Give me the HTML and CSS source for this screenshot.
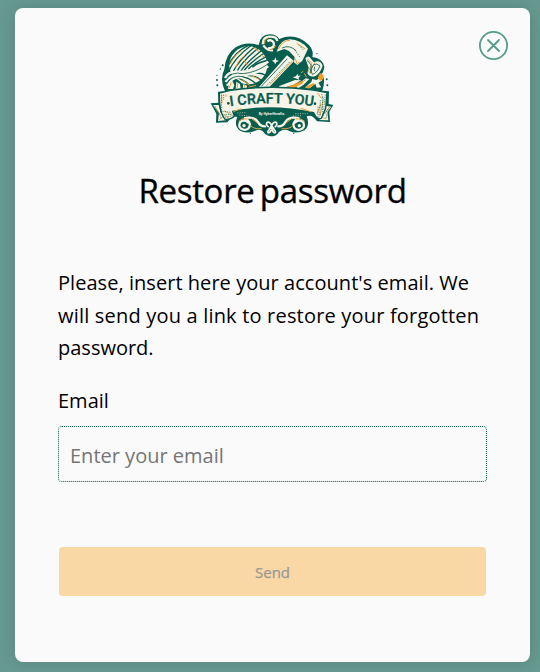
FILE: index.html
```html
<!DOCTYPE html>
<html lang="en">
<head>
<meta charset="utf-8">
<title>Restore password</title>
<link rel="stylesheet" href="styles.css">
</head>
<body>
<main class="card">
  <button class="close" type="button" aria-label="Close">
    <svg width="30" height="30" viewBox="0 0 30 30"><circle cx="14.5" cy="15.5" r="13.6"/><path d="M9 10 20 21M20 10 9 21"/></svg>
  </button>
  <svg class="logo" viewBox="0 0 432 360" role="img" aria-label="I craft you">
    <defs>
      <clipPath id="ball"><circle cx="145" cy="121" r="59"/></clipPath>
      <path id="arch" d="M91 244Q215 225 344 244"/>
    </defs>
    <!-- Silhouette -->
    <path class="green" d="M75 199Q58 164 73 133Q76 88 107 67Q137 48 176 60Q180 29 210 28Q229 28 238 42Q286 21 326 59Q342 76 337 96Q367 99 373 125Q371 142 363 148Q379 159 367 197L387 199 386 237 400 240 388 260 390 291 351 289Q337 267 320 274Q331 300 313 316Q290 328 268 318Q252 309 237 321Q228 335 215 334Q198 333 190 320Q178 309 162 319Q136 328 118 316Q101 300 112 276L98 274 82 292 48 293 49 266 32 235 55 233 54 200Z"/>
    <!-- Yarn -->
    <circle class="cream" cx="145" cy="121" r="57"/>
    <g class="strands" clip-path="url(#ball)">
      <path d="M80 130Q103 81 145 61M86 139Q104 98 154 61M99 141Q114 108 166 64M111 141Q121 114 176 68M121 141Q133 117 186 76M132 137Q145 117 193 84M145 132Q158 117 200 94M157 127Q173 112 207 105M91 158Q117 162 133 188M103 156Q132 162 151 184M119 155Q147 156 170 178M137 151Q168 150 186 168M160 145Q184 141 199 152"/>
    </g>
    <g class="orange-line"><path d="M91 117Q104 88 124 78M106 128Q115 104 134 91M160 67 177 80M181 89 193 96M125 163 149 181M153 151 178 163M132 105 144 123"/></g>
    <path class="yarn-wrap" d="M75 159Q86 135 126 141 166 139 205 110M77 171Q93 143 130 151 174 146 205 124M81 182Q97 151 128 158"/>
    <path class="strand thin" d="M79 164Q91 139 130 146 169 142 204 117M80 177Q95 148 131 155"/>
    <path class="cream" d="M84 192Q86 171 96 165L103 181 99 192ZM107 191 109 170 120 177 122 191ZM128 191 130 177 141 182 140 190Z"/>
    <path class="orange-line" d="M87 190 94 172M111 190 113 175M132 189 134 180M145 187 168 181"/>
    <path class="curl" d="M204 70Q226 70 221 53 214 41 202 49M188 58Q188 35 211 35 230 35 232 48M190 61Q201 77 219 76"/>
    <path class="orange-line" d="M194 57 195 44 206 38M209 74Q225 72 226 61"/>
    <!-- Hammer -->
    <path class="cream" d="M230 80Q239 44 269 43 304 45 324 71L307 107 292 120 282 112 284 96 267 78 253 72Z"/>
    <path class="cream" d="M261 91 282 108 206 188 175 188ZM316 100Q326 89 331 99L342 112Q360 103 368 122 361 144 348 152 331 160 322 145L326 128Z"/>
    <path class="orange-line" d="M235 72Q249 45 270 46M286 101 291 116 300 111M278 107 210 178M322 101 335 115 325 140M345 113Q334 126 332 145M290 55 316 72"/>
    <path class="strand thin" d="M246 69Q270 58 289 78M262 101 184 184M322 106 334 121 330 145M341 119Q329 133 337 148 350 146 360 123 351 113 341 119M344 125Q340 134 345 139"/>
    <path class="strand grain" d="M285 76 301 98M269 111 195 187M297 61 311 76"/>
    <!-- Small tools and sparkles -->
    <path class="cream" d="M215 107 223 105 226 97 229 105 237 108 229 111 226 118 222 111ZM278 157 288 154 292 146 295 153 302 151 296 158 297 165 290 161ZM236 184 285 165 304 166 280 180 244 190ZM286 184 317 160 328 162 310 180 294 190ZM315 188 334 171 337 162 349 165 359 160 367 166 355 174 364 187 350 188 346 176 331 188Z"/>
    <path class="orange" d="M257 188 308 167 310 174 279 191ZM316 187 340 174 344 178 326 191ZM353 159 360 144 371 151 369 163 361 167Z"/>
    <path class="orange-line" d="M303 143 310 139M313 145 320 157M289 183 317 164"/>
    <!-- Ribbon tails and body -->
    <path class="cream" d="M39 240 56 240 61 262 77 286 54 288 57 265ZM394 245 378 243 375 261 358 285 385 286 382 261Z"/>
    <path class="orange-line" d="M45 247 61 269M59 284 68 275M388 247 375 264M379 281 367 278"/>
    <path class="strand grain" d="M45 244 65 281M389 247 363 281M380 268 378 282"/>
    <path class="cream ribbon" d="M58 204 92 196Q212 178 340 195L381 203 377 250 364 280Q351 285 341 263 214 237 98 259L103 274Q91 285 75 283 57 263 58 204Z"/>
    <path class="orange-line" d="M65 207 66 235M78 208 78 216M73 257 95 271M70 267 87 280M100 260 124 251M353 204 364 220M363 236 351 266M370 225 360 272M333 260 302 250"/>
    <path class="strand grain" d="M64 210 65 257M71 209 71 225M67 259 95 262M70 270 98 267M75 277 98 272M376 208 371 255M365 207 371 223M367 216 368 269M361 225 359 275M354 245 354 277"/>
    <text class="logo-name"><textPath href="#arch" textLength="250" lengthAdjust="spacingAndGlyphs">I CRAFT YOU</textPath></text>
    <circle class="green" cx="85" cy="235" r="4"/><circle class="green" cx="345" cy="236" r="4"/>
    <text class="logo-sub" x="176" y="271" textLength="79" lengthAdjust="spacingAndGlyphs">By HyberHerafts.</text>
    <path class="strand highlight" d="M112 264 138 263M118 270 150 274M286 266 323 266M279 273 304 272"/>
    <!-- Lower flourishes -->
    <g class="flourish"><path d="M144 292Q132 281 120 292 113 309 130 314 147 317 150 299 146 283 132 280 163 273 174 291 180 304 195 304"/><path d="M286 292Q298 281 310 292 317 309 300 314 283 317 280 299 284 283 298 280 267 273 256 291 250 304 235 304"/></g>
    <path class="orange-line" d="M116 289Q128 277 142 282M151 301Q160 313 185 311M314 289Q302 277 288 282M279 301Q270 313 245 311M154 280 172 294M276 280 258 294"/>
    <path class="knot" d="M206 306C192 298 203 285 211 295L223 314C233 326 219 327 217 314L213 306M224 306C238 298 227 285 219 295L207 314C197 326 211 327 213 314"/>
    <g class="cream"><circle cx="132" cy="302" r="5"/><circle cx="298" cy="302" r="5"/></g>
    <g class="green"><circle cx="68" cy="121" r="3"/><circle cx="61" cy="132" r="2"/><circle cx="51" cy="151" r="2"/><circle cx="51" cy="165" r="3"/><circle cx="52" cy="181" r="3"/><circle cx="380" cy="163" r="3"/><circle cx="382" cy="181" r="3"/><circle cx="351" cy="86" r="2"/><circle cx="151" cy="325" r="2"/><circle cx="281" cy="325" r="2"/></g>
  </svg>
  <h1 class="title">Restore password</h1>
  <form class="form">
    <p class="intro"><span class="line one">Please, insert here your account's email. We</span> <span class="line two">will send you a link to restore your forgotten</span> <span class="line">password.</span></p>
    <label class="label" for="email">Email</label>
    <input class="input" id="email" type="email" placeholder="Enter your email">
    <button class="send" type="submit" disabled>Send</button>
  </form>
</main>
</body>
</html>
```
FILE: styles.css
```css
* { box-sizing: border-box; }
body {
  margin: 0;
  padding: 8px 10px 10px 15px;
  height: 672px;
  overflow: hidden;
  background: #669a91;
  font-family: "Open Sans", "Noto Sans", sans-serif;
  color: #000;
}
.card {
  position: relative;
  height: 654px;
  padding: 17px 43px 0;
  border-radius: 8px;
  background: #fafafa;
  box-shadow: 0 0 18px rgba(0, 0, 0, .14);
}
.close {
  position: absolute;
  top: 22px;
  right: 21px;
  width: 30px;
  height: 30px;
  padding: 0;
  border: 0;
  background: none;
}
.close svg { display: block; fill: none; stroke: #559c8b; stroke-width: 1.8; stroke-linecap: round; }
.logo { display: block; width: 144px; height: 120px; margin-left: 142px; }
.green { fill: #075d4e; }
.cream { fill: #f6f4e9; }
.orange { fill: #ef9d25; }
.strands, .strand { fill: none; stroke: #075d4e; stroke-width: 4; }
.thin { stroke-width: 2.5; }
.grain { stroke-width: 2; stroke-dasharray: 4 3; }
.highlight { stroke: #f6f4e9; stroke-width: 2; stroke-dasharray: 3 4; }
.orange-line { fill: none; stroke: #e5a13e; stroke-width: 3; }
.ribbon { stroke: #075d4e; stroke-width: 4; }
.yarn-wrap { fill: none; stroke: #f6f4e9; stroke-width: 7; }
.curl { fill: none; stroke: #f6f4e9; stroke-width: 7; }
.flourish { fill: none; stroke: #f6f4e9; stroke-width: 7; stroke-linecap: round; }
.knot { fill: none; stroke: #f6f4e9; stroke-width: 5; }
.logo-name { font: 500 43px Roboto, sans-serif; fill: #075d4e; stroke: #075d4e; stroke-width: 1; }
.logo-sub { font: 700 10px Roboto, sans-serif; fill: #f6f4e9; }
.title {
  margin: 24px 0 0;
  font: 400 33px/44px "Open Sans", sans-serif;
  letter-spacing: -.3px;
  word-spacing: -3px;
  -webkit-text-stroke: .35px #000;
  text-align: center;
  white-space: nowrap;
}
.form { display: flex; flex-direction: column; margin-top: 54px; }
.intro { margin: 0; font-size: 20px; line-height: 32.5px; }
.line { display: block; white-space: nowrap; }
.one { letter-spacing: .045px; }
.two { letter-spacing: .19px; }
.label { margin-top: 19px; font-size: 20px; line-height: 33px; }
.input {
  height: 56px;
  margin-top: 9px;
  padding: 3px 11px 0;
  border: 1px dotted #075d4e;
  border-radius: 4px;
  background: transparent;
  font: 20px "Open Sans", sans-serif;
  outline: 0;
}
.input::placeholder { color: #757575; opacity: 1; }
.send {
  height: 49px;
  margin: 65px 1px 0;
  padding: 2px 0 0;
  border: 0;
  border-radius: 4px;
  background: #f9d8a6;
  color: #989894;
  font: 500 15px "Open Sans", sans-serif;
  -webkit-text-stroke: .25px #989894;
}
```
